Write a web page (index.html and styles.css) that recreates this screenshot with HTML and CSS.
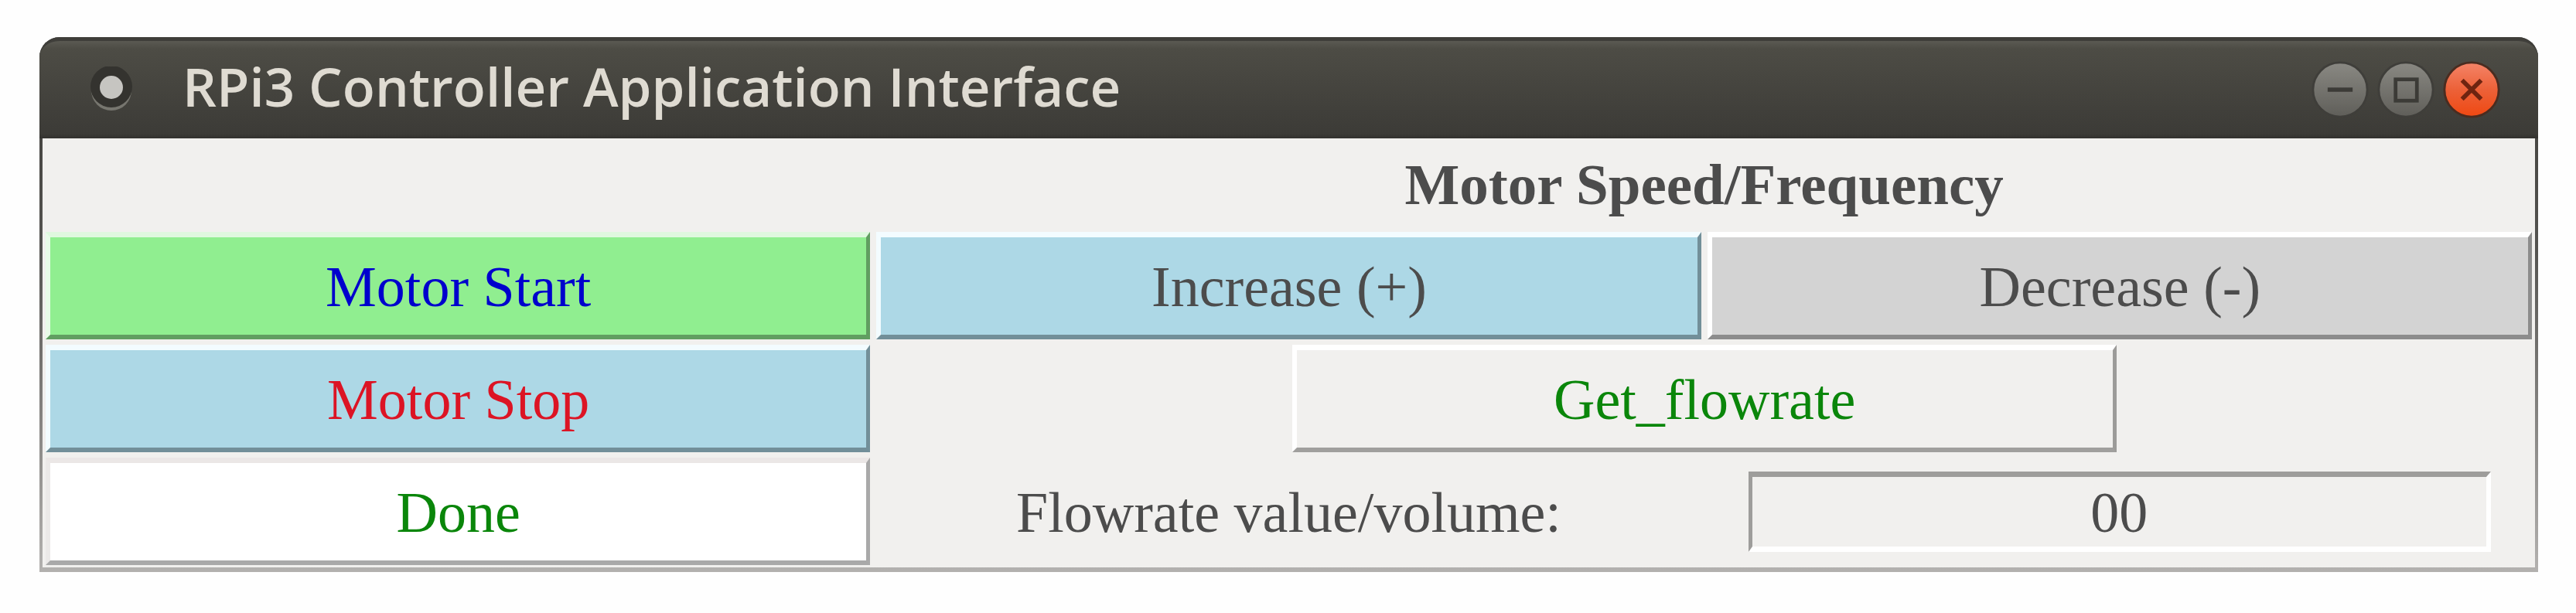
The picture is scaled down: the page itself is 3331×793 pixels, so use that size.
FILE: index.html
```html
<!DOCTYPE html>
<html lang="en">
<head>
  <meta charset="utf-8">
  <title>RPi3 Controller Application Interface</title>
  <link rel="stylesheet" href="styles.css">
</head>
<body>
  <div class="window">
    <header class="titlebar">
      <svg class="app-icon" viewBox="0 0 60 60">
        <circle cx="30" cy="31" r="26" fill="#77766f"/>
        <circle cx="30" cy="26" r="27" fill="#34332f"/>
        <circle cx="30" cy="27" r="15" fill="#c6c5c1"/>
      </svg>
      <h1 class="title">RPi3 Controller Application Interface</h1>
      <div class="window-controls">
        <button type="button" class="control" aria-label="Minimize">
          <svg viewBox="0 0 80 80">
            <defs>
              <linearGradient id="grey" x1="0" y1="0" x2="0" y2="1">
                <stop offset="0" stop-color="#8a8983"/>
                <stop offset="1" stop-color="#5f5e59"/>
              </linearGradient>
            </defs>
            <circle cx="40" cy="40" r="37" fill="url(#grey)" stroke="#3f3e3a" stroke-width="3"/>
            <path d="M23 40h34" stroke="#3c3b37" stroke-width="6"/>
          </svg>
        </button>
        <button type="button" class="control" aria-label="Maximize">
          <svg viewBox="0 0 80 80">
            <circle cx="40" cy="40" r="37" fill="url(#grey)" stroke="#3f3e3a" stroke-width="3"/>
            <rect x="26" y="26" width="29" height="29" fill="none" stroke="#3c3b37" stroke-width="5"/>
          </svg>
        </button>
        <button type="button" class="control" aria-label="Close">
          <svg viewBox="0 0 80 80">
            <defs>
              <linearGradient id="orange" x1="0" y1="0" x2="0" y2="1">
                <stop offset="0" stop-color="#f58468"/>
                <stop offset="0.5" stop-color="#ec6138"/>
                <stop offset="1" stop-color="#ef4812"/>
              </linearGradient>
            </defs>
            <circle cx="40" cy="40" r="37" fill="url(#orange)" stroke="#4a2c20" stroke-width="3"/>
            <path d="M27 27l26 26M53 27l-26 26" stroke="#6e2410" stroke-width="6"/>
          </svg>
        </button>
      </div>
    </header>

    <main class="panel">
      <h2 class="heading">Motor Speed/Frequency</h2>

      <button type="button" class="btn start">Motor Start</button>
      <button type="button" class="btn increase">Increase (+)</button>
      <button type="button" class="btn decrease">Decrease (-)</button>

      <button type="button" class="btn stop">Motor Stop</button>
      <div class="flow-action">
        <button type="button" class="btn flowrate">Get_flowrate</button>
      </div>

      <button type="button" class="btn done">Done</button>
      <label class="flow-label" for="flow-value">Flowrate value/volume:</label>
      <input class="flow-value" id="flow-value" type="text" value="00" readonly>
    </main>
  </div>
</body>
</html>
```
FILE: styles.css
```css
* {
  box-sizing: border-box;
}

body {
  margin: 48px 49px 0 51px;
  background-color: #fefefe;
  font-family: "Liberation Serif", "Times New Roman", serif;
  font-size: 74px;
  line-height: 86px;
  color: #4c4c4c;
}

/* window frame */
.window {
  padding: 0 4px 6px;
  border-radius: 26px 26px 0 0;
  background: linear-gradient(#3c3b37, #555451 40%, #b3b1af);
}

.titlebar {
  display: flex;
  align-items: center;
  height: 131px;
  margin: 0 -4px;
  padding: 0 48px 0 63px;
  border-top: 5px solid #3f3e3a;
  border-radius: 26px 26px 0 0;
  background: linear-gradient(#5a5952, #4d4c45 8%, #3c3b37 95%, #33322f);
}

.app-icon {
  width: 60px;
  height: 60px;
}

.title {
  flex: 1;
  margin: 0 0 0 62px;
  padding-bottom: 10px;
  font-family: "Open Sans", "Noto Sans", sans-serif;
  font-size: 69px;
  font-weight: 600;
  color: #dfdbd2;
}

.window-controls {
  display: flex;
  gap: 9px;
}

.control {
  width: 76px;
  height: 76px;
  padding: 0;
  border: none;
  background: none;
}

.control svg {
  display: block;
}

/* control grid */
.panel {
  display: grid;
  grid-template-columns: repeat(3, minmax(0, 1fr));
  gap: 7px 8px;
  padding: 0 4px 3px;
  background-color: #f1f0ee;
}

.heading {
  grid-column: 2 / 4;
  margin: 0;
  padding: 17px 0 11px;
  font-size: 75px;
  text-align: center;
}

.btn {
  padding: 21px 20px 19px;
  border-style: solid;
  border-width: 7px 5px 6px 6px;
  border-color: #fff #9c9b99 #a09f9d #fff;
  background-color: #f1f0ee;
  font: inherit;
  color: inherit;
}

.start {
  border-color: #dff8df #619e61 #619e61 #e8fbe8;
  background-color: #90ee90;
  color: #0000cd;
}

.increase,
.stop {
  border-color: #f3fcff #728f99 #728f99 #f3fcff;
  background-color: #add8e6;
}

.stop {
  color: #dc1424;
}

.decrease {
  border-color: #fff #8c8c8c #8c8c8c #fff;
  background-color: #d3d3d3;
}

.flow-action {
  grid-column: 2 / 4;
  display: flex;
  justify-content: center;
}

.flowrate {
  width: calc(50% - 4px);
  color: #0a860a;
}

.done {
  border-color: #ebe7e6 #a9a9a9 #a9a9a9 #ebe9e8;
  background-color: #fff;
  color: #0a860a;
}

.flow-label {
  align-self: center;
  padding-top: 3px;
  text-align: center;
}

.flow-value {
  place-self: center;
  width: 90%;
  height: 104px;
  padding: 3px 0 0;
  border-style: solid;
  border-width: 7px 6px 7px 5px;
  border-color: #9e9d9b #fff #fff #9e9d9b;
  background-color: #f1f0ee;
  font: inherit;
  text-align: center;
  color: inherit;
}
```
